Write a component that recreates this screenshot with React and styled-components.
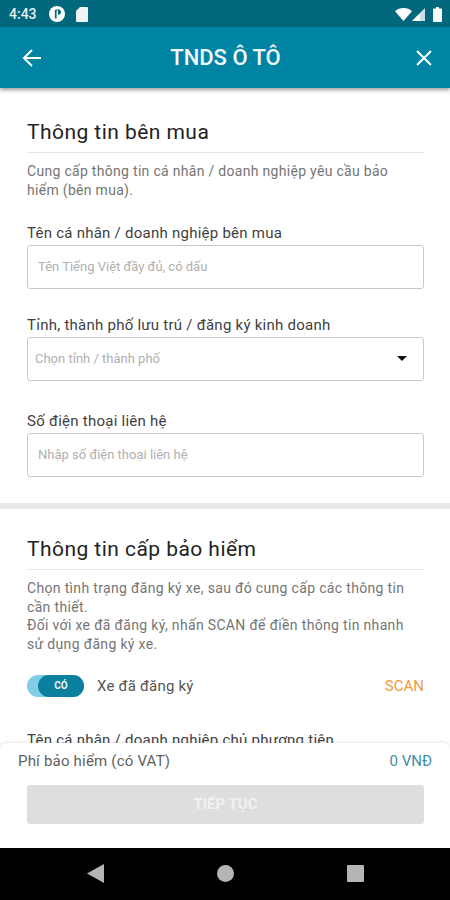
import React from 'react'
import styled, { createGlobalStyle } from 'styled-components'

const GlobalStyle = createGlobalStyle`
  html, body { margin: 0; padding: 0; background: #fff; }
  body { font-family: Roboto, "Liberation Sans", sans-serif; }
  * { box-sizing: border-box; }
`

function Field ({ label, hint, select, gap }) {
  return (
    <FieldWrap $gap={gap}>
      <FieldLabel>{label}</FieldLabel>
      <InputBox $select={select}>
        <Hint $select={select}>{hint}</Hint>
        {select && <Caret />}
      </InputBox>
    </FieldWrap>
  )
}

function App () {
  return (
    <Screen>
      <GlobalStyle />
      <StatusBar>
        <Clock>4:43</Clock>
        <svg width='16' height='16' viewBox='0 0 16 16'>
          <circle cx='8' cy='8' r='8' fill='#fff' />
          <path d='M7 3.500h2.400a2.600 2.600 0 0 1 0 5.200H9V4.500H7.600v8H5.900V4.200z' fill='#00677d' />
        </svg>
        <SdCard width='12' height='15' viewBox='0 0 12 15'>
          <path d='M4 0h7a1 1 0 0 1 1 1v13a1 1 0 0 1-1 1H1a1 1 0 0 1-1-1V4z' fill='#eef4f6' />
        </SdCard>
        <Spacer />
        <svg width='17' height='13' viewBox='0 0 17 13'>
          <path d='M0 3.200C2.200 1.200 5.200 0 8.500 0s6.300 1.200 8.500 3.200L8.500 13z' fill='#fff' />
        </svg>
        <svg width='13' height='13' viewBox='0 0 13 13'>
          <path d='M13 0v13H0z' fill='#c9dfe5' />
          <path d='M8 5.500V13H0z' fill='#fff' />
        </svg>
        <Battery width='9' height='15' viewBox='0 0 9 15'>
          <path d='M3 0h3v1.500h2a1 1 0 0 1 1 1V14a1 1 0 0 1-1 1H1a1 1 0 0 1-1-1V2.500a1 1 0 0 1 1-1h2z' fill='#fff' />
        </Battery>
      </StatusBar>

      <AppBar>
        <svg width='20' height='20' viewBox='0 0 20 20' fill='none' stroke='#fff' strokeWidth='2'>
          <path d='M19 10H2M10 2l-8 8 8 8' />
        </svg>
        <AppTitle>TNDS Ô TÔ</AppTitle>
        <svg width='18' height='18' viewBox='0 0 18 18' fill='none' stroke='#fff' strokeWidth='2'>
          <path d='M2 2l14 14M16 2L2 16' />
        </svg>
      </AppBar>

      <Content>
        <Section $top={29}>
          <SectionTitle>Thông tin bên mua</SectionTitle>
          <Description $top={9} $spacing={0.3}>
            Cung cấp thông tin cá nhân / doanh nghiệp yêu cầu bảo<br />hiểm (bên mua).
          </Description>
          <Field gap={24.5} label='Tên cá nhân / doanh nghiệp bên mua' hint='Tên Tiếng Việt đầy đủ, có dấu' />
          <Field gap={27} select label='Tỉnh, thành phố lưu trú / đăng ký kinh doanh' hint='Chọn tỉnh / thành phố' />
          <Field gap={31} label='Số điện thoại liên hệ' hint='Nhập số điện thoại liên hệ' />
        </Section>
        <Band />
        <Section $top={25}>
          <SectionTitle>Thông tin cấp bảo hiểm</SectionTitle>
          <Description $top={9.5} $spacing={0.33}>
            Chọn tình trạng đăng ký xe, sau đó cung cấp các thông tin<br />
            cần thiết.<br />
            Đối với xe đã đăng ký, nhấn SCAN để điền thông tin nhanh<br />
            sử dụng đăng ký xe.
          </Description>
          <ToggleRow>
            <Toggle><Knob>CÓ</Knob></Toggle>
            <ToggleLabel>Xe đã đăng ký</ToggleLabel>
            <Spacer />
            <ScanLink>SCAN</ScanLink>
          </ToggleRow>
          <FieldLabel>Tên cá nhân / doanh nghiệp chủ phương tiện</FieldLabel>
        </Section>
      </Content>

      <Sheet>
        <FeeRow>
          <FeeLabel>Phí bảo hiểm (có VAT)</FeeLabel>
          <FeeValue>0 VNĐ</FeeValue>
        </FeeRow>
        <ContinueButton>TIẾP TỤC</ContinueButton>
      </Sheet>

      <NavBar>
        <svg width='17' height='19' viewBox='0 0 17 19'><path d='M17 0v19L0 9.500z' fill='#b5b5b5' /></svg>
        <svg width='17' height='17' viewBox='0 0 17 17'><circle cx='8.500' cy='8.500' r='8.500' fill='#b5b5b5' /></svg>
        <svg width='17' height='17' viewBox='0 0 17 17'><rect width='17' height='17' rx='1' fill='#b5b5b5' /></svg>
      </NavBar>
    </Screen>
  )
}

const Screen = styled.div`
  position: relative;
  width: 450px;
  height: 900px;
  display: flex;
  flex-direction: column;
  overflow: hidden;
  background: #fff;
`

const StatusBar = styled.div`
  height: 27px;
  flex: none;
  display: flex;
  align-items: center;
  padding: 1px 8px 0 9px;
  background: #00677d;
  svg { flex: none; }
`

const SdCard = styled.svg`
  margin-left: 11px;
`

const Battery = styled.svg`
  margin-left: 8px;
`

const Clock = styled.span`
  margin-right: 12px;
  color: #e6f0f3;
  font-size: 14px;
  font-weight: 500;
`

const Spacer = styled.div`
  flex: 1;
`

const AppBar = styled.div`
  position: relative;
  z-index: 2;
  height: 61px;
  flex: none;
  display: flex;
  align-items: center;
  justify-content: space-between;
  padding: 0 17px 0 22px;
  background: #0084a4;
  box-shadow: 0 2px 4px rgba(0, 0, 0, 0.4);
`

const AppTitle = styled.h1`
  margin: 0 6px 0 0;
  color: #f4f9fb;
  font-size: 22px;
  font-weight: 500;
`

const Content = styled.div`
  flex: 1;
  min-height: 0;
  overflow: hidden;
`

const Section = styled.section`
  padding: ${p => p.$top}px 26px 26px 27px;
`

const SectionTitle = styled.h2`
  margin: 0;
  height: 36px;
  border-bottom: 1px solid #e6e6e6;
  color: #222;
  font-size: 21px;
  font-weight: 400;
  line-height: 30px;
  letter-spacing: 0.45px;
`

const Description = styled.p`
  margin: ${p => p.$top}px 0 0;
  color: #757575;
  font-size: 14px;
  line-height: 18.500px;
  letter-spacing: ${p => p.$spacing}px;
  white-space: nowrap;
`

const FieldWrap = styled.div`
  margin-top: ${p => p.$gap}px;
`

const FieldLabel = styled.div`
  margin-bottom: 2px;
  color: #3f3f3f;
  font-size: 15px;
  line-height: 19px;
  letter-spacing: 0.25px;
  white-space: nowrap;
`

const InputBox = styled.div`
  height: 44px;
  display: flex;
  align-items: center;
  justify-content: space-between;
  padding: 0 ${p => (p.$select ? '16px' : '10px')} 0 ${p => (p.$select ? '7px' : '10px')};
  border: 1.500px solid #c9c9c9;
  border-radius: 3px;
`

const Hint = styled.span`
  color: #b0b0b0;
  font-size: 13px;
`

const Caret = styled.span`
  width: 0;
  height: 0;
  border-left: 5px solid transparent;
  border-right: 5px solid transparent;
  border-top: 5px solid #111;
`

const Band = styled.div`
  height: 6px;
  background: #e8e8e8;
`

const ToggleRow = styled.div`
  display: flex;
  align-items: center;
  height: 22px;
  margin: 22px 0 34px;
`

const Toggle = styled.div`
  width: 57px;
  height: 22px;
  display: flex;
  justify-content: flex-end;
  border-radius: 11px;
  background: #7fcde6;
`

const Knob = styled.div`
  width: 46px;
  height: 22px;
  border-radius: 11px;
  background: #0a7f9e;
  color: #e8f4f7;
  font-size: 10px;
  font-weight: 700;
  line-height: 22px;
  text-align: center;
`

const ToggleLabel = styled.span`
  margin-left: 13px;
  color: #555;
  font-size: 15px;
  letter-spacing: 0.2px;
`

const ScanLink = styled.span`
  color: #f29a38;
  font-size: 15px;
`

const Sheet = styled.div`
  position: absolute;
  left: 0;
  right: 0;
  bottom: 52px;
  height: 105px;
  padding: 9px 26px 0 27px;
  border-radius: 6px 6px 0 0;
  background: #fff;
  box-shadow: 0 -1px 3px rgba(0, 0, 0, 0.1);
`

const FeeRow = styled.div`
  display: flex;
  justify-content: space-between;
  margin: 0 -8px 15px -9px;
  font-size: 15px;
  line-height: 18px;
`

const FeeLabel = styled.span`
  color: #5f5f5f;
  letter-spacing: 0.2px;
`

const FeeValue = styled.span`
  color: #3f8ea5;
`

const ContinueButton = styled.div`
  height: 39px;
  border-radius: 3px;
  background: #dedede;
  color: #f1f1f1;
  font-size: 15px;
  font-weight: 700;
  line-height: 39px;
  text-align: center;
`

const NavBar = styled.div`
  height: 52px;
  flex: none;
  position: relative;
  z-index: 3;
  display: flex;
  align-items: center;
  justify-content: space-between;
  padding: 0 86px 2px 87px;
  background: #000;
`

export default App
